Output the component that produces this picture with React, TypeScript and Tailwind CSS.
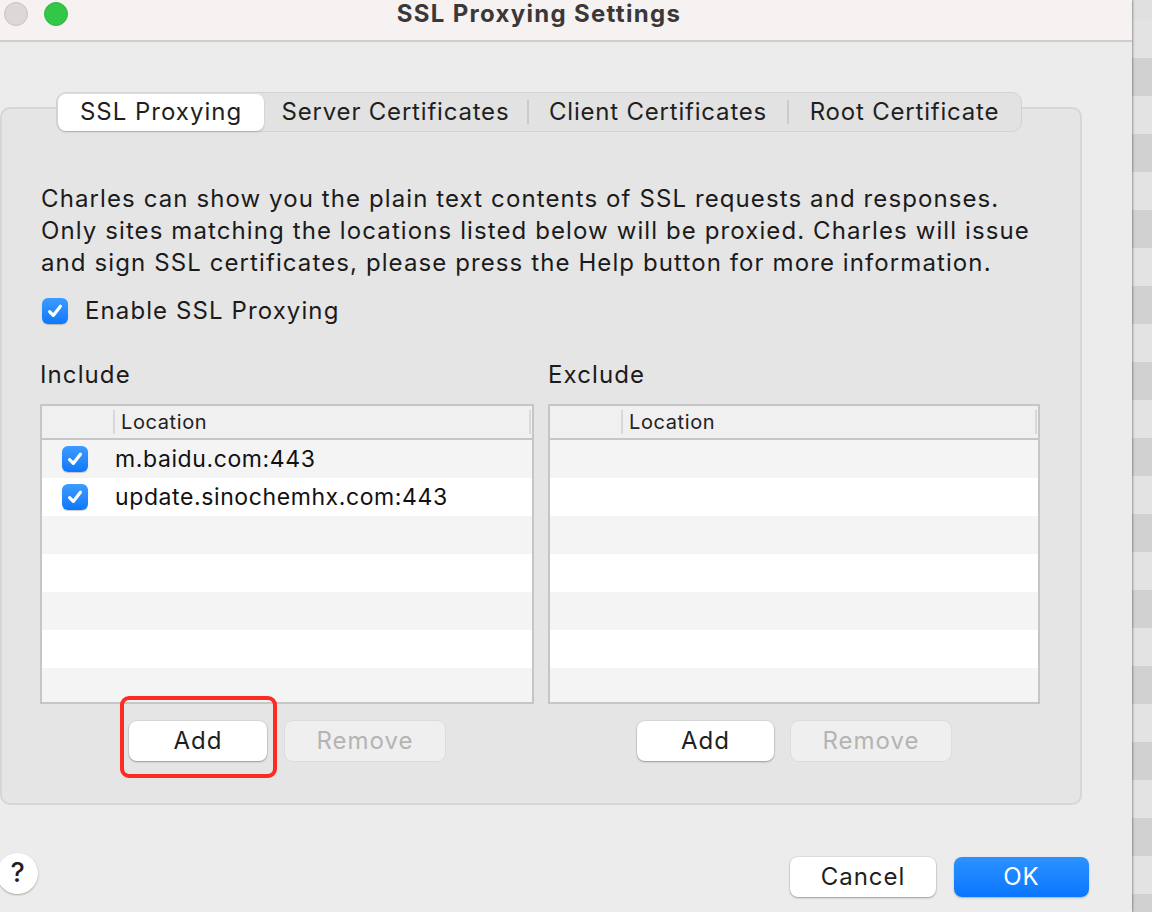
import React from "react";

const font = { fontFamily: "Inter, 'Noto Sans', 'Liberation Sans', sans-serif" };

function CheckBox() {
  return (
    <span className="flex h-[26px] w-[26px] shrink-0 items-center justify-center rounded-[6px] bg-gradient-to-b from-[#3d9bff] to-[#0a78fb] shadow-[0_1px_1px_rgba(0,0,0,0.2)]">
      <svg width="18" height="18" viewBox="0 0 18 18" fill="none">
        <path d="M3.6 9.6 L7.3 13.4 L14.4 4.3" stroke="white" strokeWidth="3.2" strokeLinecap="round" strokeLinejoin="round" />
      </svg>
    </span>
  );
}

function Button({ label, disabled, className = "" }: { label: string; disabled?: boolean; className?: string }) {
  return (
    <div
      className={
        "flex h-[40px] items-center justify-center rounded-[8px] text-[24px] tracking-[1px] " +
        (disabled
          ? "bg-[#efefef] text-[#b4b4b4] shadow-[0_0_0_1px_rgba(0,0,0,0.04)] "
          : "bg-white text-[#1f1f1f] shadow-[0_1px_2px_rgba(0,0,0,0.3),0_0_0_1px_rgba(0,0,0,0.05)] ") +
        className
      }
    >
      {label}
    </div>
  );
}

function LocationTable({ rows, className = "" }: { rows: string[]; className?: string }) {
  const lines = Array.from({ length: 7 }, (_, i) => rows[i]);
  return (
    <div className={"flex h-[300px] flex-col overflow-hidden border-2 border-[#c6c6c6] bg-white " + className}>
      <div className="flex h-[32px] shrink-0 items-center bg-[#f0f0f0]">
        <div className="w-[71px] shrink-0" />
        <div className="h-[24px] w-[2px] bg-[#d9d9d9]" />
        <div className="flex-1 pl-[6px] text-[20px] tracking-[0.6px] text-[#222]">Location</div>
        <div className="mr-[1px] h-[24px] w-[2px] bg-[#d9d9d9]" />
      </div>
      <div className="h-[2px] shrink-0 bg-[#c6c6c6]" />
      {lines.map((r, i) => (
        <div
          key={i}
          className={"flex h-[38px] shrink-0 items-center " + (i % 2 === 0 ? "bg-[#f4f4f4]" : "bg-white")}
        >
          {r && (
            <>
              <div className="w-[73px] shrink-0 pl-[20px]">
                <CheckBox />
              </div>
              <span className="text-[23px] tracking-[0.6px] text-[#111]">{r}</span>
            </>
          )}
        </div>
      ))}
    </div>
  );
}

export default function App() {
  const tabs = [
    { label: "Server Certificates", w: "w-[263px]" },
    { label: "Client Certificates", w: "w-[258px]" },
    { label: "Root Certificate", w: "flex-1" },
  ];
  return (
    <div className="flex h-[912px] w-[1152px] overflow-hidden bg-[#d6d6d6]" style={font}>
      <div className="relative flex h-[912px] w-[1132px] shrink-0 flex-col bg-[#ececec] shadow-[1px_0_2px_rgba(0,0,0,0.35)]">
        {/* title bar */}
        <div className="relative flex h-[42px] shrink-0 items-start border-b-2 border-[#d2cdcd] bg-[#f7f2f2]">
          <div className="flex gap-[16px] pl-[4px] pt-[2px]">
            <span className="h-[24px] w-[24px] rounded-full border border-[#c9c4c4] bg-[#dcd8d8]" />
            <span className="h-[24px] w-[24px] rounded-full border border-[#2fb943] bg-[#33c748]" />
          </div>
          <div className="absolute left-0 top-[0px] w-[1078px] text-center text-[24px] font-bold leading-[28px] tracking-[1.3px] text-[#3a3838]">
            SSL Proxying Settings
          </div>
        </div>

        {/* group box */}
        <div className="mt-[65px] flex h-[698px] w-[1082px] flex-col rounded-[10px] border-2 border-[#d6d6d6] bg-[#e5e5e5]">
          <div className="-mt-[17px] ml-[54px] flex h-[40px] w-[966px] items-center rounded-[10px] border border-[#d3d3d3] bg-[#e2e2e2] p-[1px] text-[24px] tracking-[0.8px] text-[#1f1f1f]">
            <div className="flex h-[37px] w-[206px] shrink-0 items-center justify-center rounded-[8px] bg-white tracking-[1px] shadow-[0_1px_2px_rgba(0,0,0,0.2)]">
              SSL Proxying
            </div>
            {tabs.map((t, i) => (
              <React.Fragment key={t.label}>
                {i > 0 && <div className="h-[24px] w-[2px] shrink-0 bg-[#cbcbcb]" />}
                <div className={"flex items-center justify-center " + t.w}>{t.label}</div>
              </React.Fragment>
            ))}
          </div>

          <div className="mt-[51px] pl-[39px] text-[24px] leading-[32px] tracking-[1.1px] text-[#1b1b1b]">
            <p>Charles can show you the plain text contents of SSL requests and responses.</p>
            <p>Only sites matching the locations listed below will be proxied. Charles will issue</p>
            <p>and sign SSL certificates, please press the Help button for more information.</p>
          </div>

          <div className="mt-[16px] flex h-[32px] items-center gap-[17px] pl-[40px] text-[24px] tracking-[1.1px] text-[#1b1b1b]">
            <CheckBox />
            <span>Enable SSL Proxying</span>
          </div>

          <div className="mt-[32px] flex gap-[14px] pl-[38px]">
            <div className="flex w-[494px] flex-col">
              <div className="h-[32px] text-[24px] leading-[32px] tracking-[1.1px] text-[#1b1b1b]">Include</div>
              <LocationTable className="mt-[13px]" rows={["m.baidu.com:443", "update.sinochemhx.com:443"]} />
              <div className="mt-[17px] flex justify-center gap-[18px]">
                <div className="relative">
                  <Button label="Add" className="w-[138px]" />
                  <span className="absolute -bottom-[17px] -left-[9px] -right-[10px] -top-[25px] rounded-[9px] border-[4px] border-[#fe2b21]" />
                </div>
                <Button label="Remove" disabled className="w-[160px]" />
              </div>
            </div>
            <div className="flex w-[492px] flex-col">
              <div className="h-[32px] text-[24px] leading-[32px] tracking-[1.1px] text-[#1b1b1b]">Exclude</div>
              <LocationTable className="mt-[13px]" rows={[]} />
              <div className="mt-[17px] flex justify-center gap-[17px]">
                <Button label="Add" className="w-[137px]" />
                <Button label="Remove" disabled className="w-[160px]" />
              </div>
            </div>
          </div>
        </div>

        {/* footer */}
        <div className="mt-[52px] flex items-start">
          <div className="-ml-[3px] -mt-[4px] flex h-[41px] w-[41px] items-center justify-center rounded-full bg-white text-[27px] font-medium text-[#1f1f1f] shadow-[0_1px_2px_rgba(0,0,0,0.3)]">
            ?
          </div>
          <div className="ml-auto mr-[43px] flex gap-[18px]">
            <Button label="Cancel" className="w-[146px]" />
            <div className="flex h-[40px] w-[135px] items-center justify-center rounded-[8px] bg-gradient-to-b from-[#2a92ff] to-[#0a76ff] text-[24px] tracking-[1px] text-white shadow-[0_1px_2px_rgba(0,0,0,0.25)]">
              OK
            </div>
          </div>
        </div>
      </div>

      {/* background stripes behind window */}
      <div className="flex w-[20px] flex-col">
        <div className="h-[20px] shrink-0 bg-[#e0e0e0]" />
        {Array.from({ length: 24 }, (_, i) => (
          <div key={i} className={"h-[38px] shrink-0 " + (i % 2 === 0 ? "bg-[#e3e3e3]" : "bg-[#d1d1d1]")} />
        ))}
      </div>
    </div>
  );
}
